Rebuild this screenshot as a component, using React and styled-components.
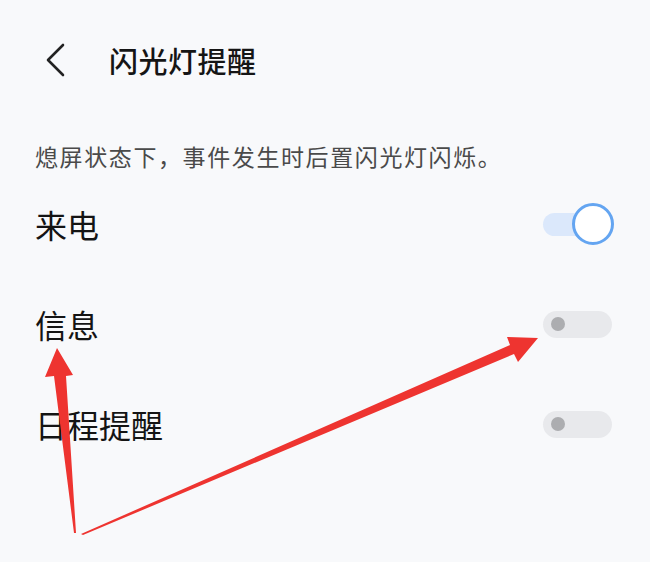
import styled, { createGlobalStyle } from "styled-components"

const GlobalStyle = createGlobalStyle`
  body {
    margin: 0;
    background: #f8f9fb;
    font-family: "Noto Sans CJK SC", "Noto Sans", sans-serif;
  }
`

const Page = styled.div`
  position: relative;
  width: 650px;
  height: 562px;
  overflow: hidden;
  background: #f8f9fb;
`

const Header = styled.header`
  display: flex;
  align-items: center;
  height: 120px;
  padding-left: 44px;
  gap: 43px;
`

const BackButton = styled.button`
  display: flex;
  padding: 0;
  border: 0;
  background: none;
`

const Title = styled.h1`
  margin: 0;
  font-size: 29px;
  font-weight: 500;
  color: #151515;
  letter-spacing: 0.5px;
`

const Hint = styled.p`
  margin: 21px 0 3px;
  padding: 0 35px;
  font-size: 23px;
  line-height: 30px;
  color: #4a4a4a;
  letter-spacing: 1.6px;
`

const List = styled.ul`
  margin: 0;
  padding: 0;
  list-style: none;
`

const Row = styled.li`
  display: flex;
  align-items: center;
  justify-content: space-between;
  height: 100px;
  padding: 0 37px 0 35px;
`

const Label = styled.span`
  font-size: 32px;
  color: #141414;
`

const Switch = styled.div`
  position: relative;
  display: flex;
  align-items: center;
  width: 70px;
  height: 42px;
`

const Track = styled.div`
  width: ${p => (p.$on ? "58px" : "69px")};
  height: ${p => (p.$on ? "23px" : "27px")};
  border-radius: 14px;
  background: ${p => (p.$on ? "#dbe8fb" : "#e8e9ec")};
`

const Knob = styled.span`
  position: absolute;
  top: 50%;
  transform: translateY(-50%);
  border-radius: 50%;
  box-sizing: border-box;
  ${p =>
    p.$on
      ? `right: -1px; width: 42px; height: 42px; background: #fff; border: 3.5px solid #64a5f1;`
      : `left: 8px; width: 14px; height: 14px; background: #acadb0;`}
`

const Annotations = styled.svg`
  position: absolute;
  inset: 0;
  pointer-events: none;
`

const items = [
  { label: "来电", on: true },
  { label: "信息", on: false },
  { label: "日程提醒", on: false },
]

const Toggle = ({ on }) => (
  <Switch>
    <Track $on={on} />
    <Knob $on={on} />
  </Switch>
)

export default function App() {
  return (
    <Page>
      <GlobalStyle />
      <Header>
        <BackButton aria-label="返回">
          <svg width="22" height="34" viewBox="0 0 22 34">
            <path d="M19 2 L4 17 L19 32" fill="none" stroke="#222" strokeWidth="2.6" strokeLinecap="round" strokeLinejoin="round" />
          </svg>
        </BackButton>
        <Title>闪光灯提醒</Title>
      </Header>
      <Hint>熄屏状态下，事件发生时后置闪光灯闪烁。</Hint>
      <List>
        {items.map(item => (
          <Row key={item.label}>
            <Label>{item.label}</Label>
            <Toggle on={item.on} />
          </Row>
        ))}
      </List>

      {/* red pointer arrows drawn on top */}
      <Annotations width="650" height="562" viewBox="0 0 650 562">
        <polygon points="74,533 54,376 45,377 57,348 73,375 66,376 76,533" fill="#ee3430" />
        <polygon points="81,534 510,345 507,337 538,338 518,362 514,354 83,535" fill="#ee3430" />
      </Annotations>
    </Page>
  )
}
